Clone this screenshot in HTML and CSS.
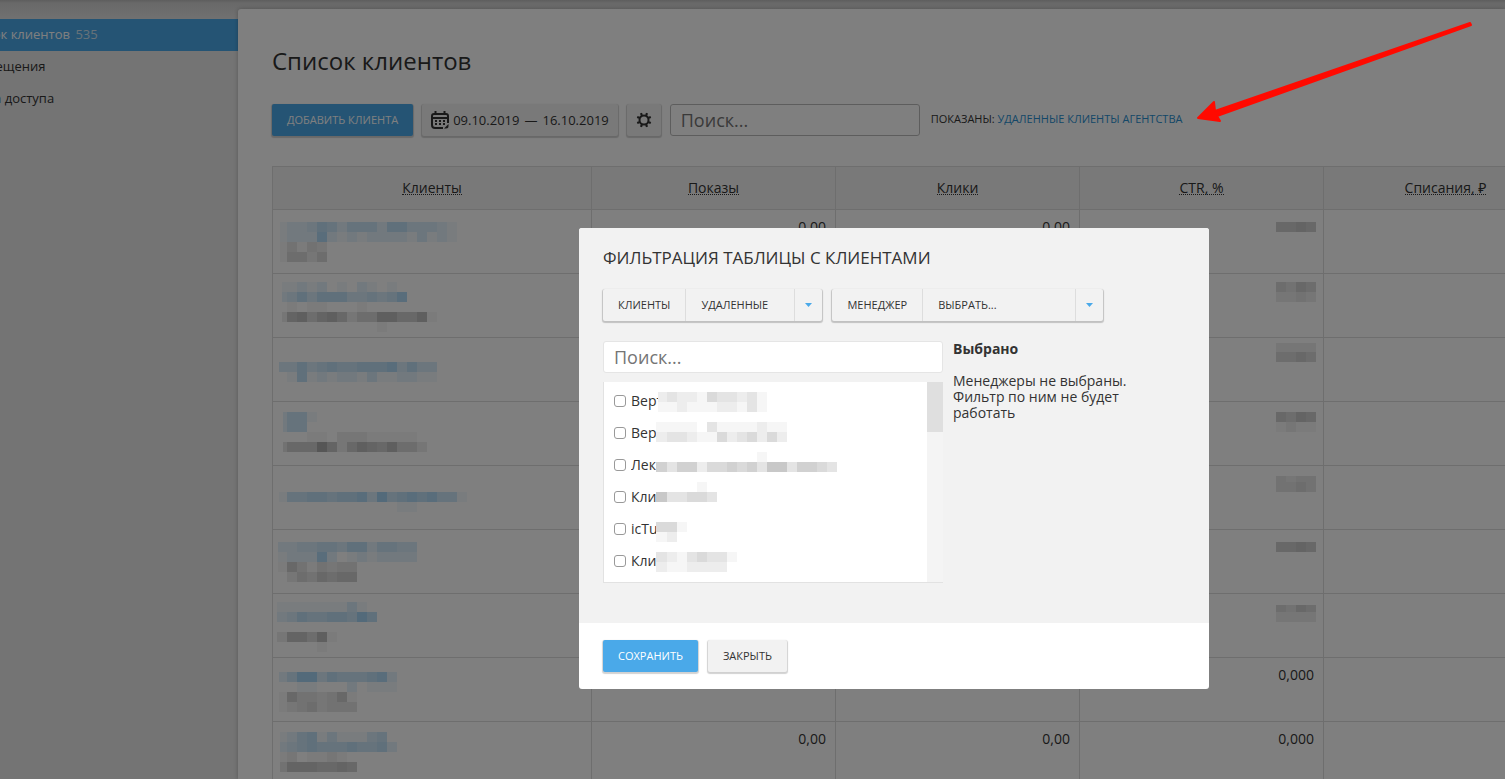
FILE: index.html
```
<!DOCTYPE html>
<html lang="ru">
<head>
<meta charset="utf-8">
<title>Список клиентов</title>
<link rel="stylesheet" href="styles.css">
</head>
<body>
<div class="page">
  <nav class="sidebar">
    <a class="nav-item active" href="#">Список клиентов <span class="count">535</span></a>
    <a class="nav-item" href="#">Оповещения</a>
    <a class="nav-item" href="#">Права доступа</a>
  </nav>
  <main class="panel">
    <h1>Список клиентов</h1>
    <div class="toolbar">
      <button class="btn primary" type="button">Добавить клиента</button>
      <button class="btn date" type="button">
        <svg width="18" height="18" viewBox="0 0 18 18" fill="none" stroke="#333" stroke-width="2"><path d="M12 17H4a3 3 0 0 1-3-3V5a2 2 0 0 1 2-2h12a2 2 0 0 1 2 2v7"/><path d="M1 7h16M4.500 0v4M13.500 0v4"/><path d="M13 17.500l4.500-4.500v2a2.500 2.500 0 0 1-2.500 2.500z" fill="#333" stroke="none"/><path d="M4 10h2M8 10h2M12 10h2M4 13h2M8 13h2M12 13h2"/></svg>
        <span class="range"><span>09.10.2019</span><span>—</span><span>16.10.2019</span></span>
      </button>
      <button class="btn gear" type="button" aria-label="Настройки">
        <svg width="16" height="16" viewBox="0 0 16 16" fill="none" stroke="#333"><circle cx="8" cy="8" r="4.500" stroke-width="2"/><path stroke-width="2.200" d="M6 4L5 1.200M10 4l1-2.800M6 12l-1 2.800M10 12l1 2.800M4 6L1.200 5M4 10l-2.800 1M12 6l2.800-1M12 10l2.800 1"/></svg>
      </button>
      <input class="search" type="text" placeholder="Поиск..." aria-label="Поиск клиентов">
      <p class="shown">Показаны: <a href="#">удаленные клиенты агентства</a></p>
    </div>
    <table class="clients">
      <colgroup><col class="col-name"><col class="col-num"><col class="col-num"><col class="col-num"><col class="col-num"></colgroup>
      <thead>
        <tr><th><span>Клиенты</span></th><th><span>Показы</span></th><th><span>Клики</span></th><th><span>CTR, %</span></th><th><span>Списания, ₽</span></th></tr>
      </thead>
      <tbody>
        <tr><td class="name"><svg class="mosaic" data-first="7" data-cells="12b122354244425533321 22b122262121222213121 32g13132 42g14424"></svg></td><td>0,00</td><td>0,00</td><td class="hidden-value"><svg class="mosaic" data-cells="12g5565"></svg></td><td></td></tr>
        <tr><td class="name"><svg class="mosaic" data-first="5" data-cells="8b1121201021010 18b2353555334346 28g010110001 38g2674675244775571 48g0000000000100"></svg></td><td></td><td></td><td class="hidden-value"><svg class="mosaic" data-cells="8g4354 18g2232"></svg></td><td></td></tr>
        <tr><td class="name"><svg class="mosaic" data-first="8" data-cells="24b3353454455563533 34b0151212213112211"></svg></td><td></td><td></td><td class="hidden-value"><svg class="mosaic" data-cells="5g2222 14g4454"></svg></td><td></td></tr>
        <tr><td class="name"><svg class="mosaic" data-first="4" data-cells="10b2441 20b2440 30g00011022211111 40g355596257657442"></svg></td><td></td><td></td><td class="hidden-value"><svg class="mosaic" data-cells="10g5465 20g1211"></svg></td><td></td></tr>
        <tr><td class="name"><svg class="mosaic" data-first="8" data-cells="26b1445545563745656441 36b00000000000011"></svg></td><td></td><td></td><td class="hidden-value"><svg class="mosaic" data-cells="10g3233 16g3343"></svg></td><td></td></tr>
        <tr><td class="name"><svg class="mosaic" data-first="9" data-cells="12b22334435524433 22b12226201212222 32g15313233 42g02435455"></svg></td><td></td><td></td><td class="hidden-value"><svg class="mosaic" data-cells="12g5565"></svg></td><td></td></tr>
        <tr><td class="name"><svg class="mosaic" data-first="10" data-cells="8b111111131 18b2354455475 38g266471 48g00001"></svg></td><td></td><td></td><td class="hidden-value"><svg class="mosaic" data-cells="11g4354 18g2222"></svg></td><td></td></tr>
        <tr><td class="name"><svg class="mosaic" data-first="8" data-cells="14b247735444562 24b001100020111 34g15332351 44g12342333"></svg></td><td></td><td></td><td>0,000</td><td></td></tr>
        <tr><td class="name"><svg class="mosaic" data-first="7" data-cells="10b124513111340 20b234544454452 30g1201121 40g36665565"></svg></td><td>0,00</td><td>0,00</td><td>0,000</td><td></td></tr>
      </tbody>
    </table>
  </main>
</div>

<div class="overlay">
  <section class="modal" role="dialog" aria-labelledby="modal-title">
    <div class="modal-body">
      <h2 id="modal-title">Фильтрация таблицы с клиентами</h2>
      <div class="filters">
        <div class="filter">
          <label for="clients">Клиенты</label>
          <div class="select clients-select">
            <select id="clients"><option>УДАЛЕННЫЕ</option></select>
            <svg viewBox="0 0 7 4" width="7" height="4"><path d="M0 0h7L3.500 4z" fill="#4aa9e9"/></svg>
          </div>
        </div>
        <div class="filter">
          <label for="manager">Менеджер</label>
          <div class="select manager-select">
            <select id="manager"><option>ВЫБРАТЬ...</option></select>
            <svg viewBox="0 0 7 4" width="7" height="4"><path d="M0 0h7L3.500 4z" fill="#4aa9e9"/></svg>
          </div>
        </div>
      </div>
      <div class="columns">
        <div class="managers">
          <input class="search" type="text" placeholder="Поиск..." aria-label="Поиск менеджера">
          <div class="list">
            <div class="items">
              <label><input type="checkbox"><span class="who wide">Верт</span><svg class="mosaic" data-first="9" data-cells="7g23221433231 17g11211122131"></svg></label>
              <label><input type="checkbox"><span class="who">Вер</span><svg class="mosaic" data-first="11" data-cells="5g1111031111211 15g2332114234242"></svg></label>
              <label><input type="checkbox"><span class="who">Лек</span><svg class="mosaic" data-first="11" data-cells="3g00000000001 13g535524454536635543"></svg></label>
              <label><input type="checkbox"><span class="who">Кли</span><svg class="mosaic" data-first="11" data-cells="1g000010 11g633443"></svg></label>
              <label><input type="checkbox"><span class="who">icTu</span><svg class="mosaic" data-first="11" data-cells="9g441 19g120"></svg></label>
              <label><input type="checkbox"><span class="who">Кли</span><svg class="mosaic" data-first="11" data-cells="7g32134331 17g21122220"></svg></label>
            </div>
            <div class="track"><div class="thumb"></div></div>
          </div>
        </div>
        <div class="chosen">
          <h3>Выбрано</h3>
          <p>Менеджеры не выбраны. Фильтр по ним не будет работать</p>
        </div>
      </div>
    </div>
    <footer>
      <button class="btn primary" type="button">Сохранить</button>
      <button class="btn" type="button">Закрыть</button>
    </footer>
  </section>
</div>

<svg class="arrow" width="280" height="104" viewBox="0 0 280 104"><path d="M3 98L19 82L20 91L275 3L276 5L22 96L25 101Z" fill="#ff0a00" stroke="#ff0a00" stroke-width="2" stroke-linejoin="round"/></svg>
<script src="script.js"></script>
</body>
</html>
```
FILE: styles.css
```
* { box-sizing: border-box; }
body {
  margin: 0;
  height: 100vh;
  overflow: hidden;
  color: #333;
  background: #e8e8e8;
  font: 14px/16px "Open Sans", "Noto Sans", sans-serif;
}
h1, h2, h3, p { margin: 0; font-weight: 400; }
input, button, select { font-family: inherit; color: inherit; }
a { color: #2a8fd0; text-decoration: none; }

.page {
  display: grid;
  grid-template-columns: 238px minmax(0, 1fr);
  height: 100vh;
  padding-top: 9px;
  background: linear-gradient(#bcbcbc 0, #d2d2d2 3px, #d8d8d8 9px, #e8e8e8 24px);
}
.sidebar { padding-top: 10px; overflow: hidden; }
.nav-item {
  display: block;
  height: 32px;
  text-indent: -38px;
  font-size: 13px;
  line-height: 30px;
  color: #333;
  white-space: nowrap;
}
.nav-item.active { background: #4aa9e9; color: #fff; }
.count { margin-left: 2px; color: #d0e4f2; }

.panel {
  padding: 36px 0 0 34px;
  overflow: hidden;
  background: #fff;
  border-radius: 3px 0 0 0;
  box-shadow: 0 0 4px rgba(0, 0, 0, .25);
}
h1 { font-size: 24px; line-height: 32px; }
.toolbar { display: flex; align-items: flex-start; gap: 9px; margin: 27px 0 30px; }
.btn {
  display: flex;
  align-items: center;
  height: 32px;
  padding: 0 15px 2px;
  border: 0;
  border-radius: 2px;
  background: #f2f2f2;
  box-shadow: 0 1px 1px 1px rgba(0, 0, 0, .18);
  font-size: 11px;
  text-transform: uppercase;
}
.btn.primary { background: #4aa9e9; color: #fff; }
.btn.date { gap: 4px; padding: 0 9px; font-size: 13px; }
.range { display: flex; gap: 5px; }
.btn.gear { padding: 0 9px; }
.search {
  width: 250px;
  height: 32px;
  padding: 0 10px;
  border: 1px solid #bbb;
  border-radius: 3px;
  background: #fff;
  font-size: 18px;
}
.search::placeholder { color: #757575; opacity: 1; }
.shown { margin-left: 2px; font-size: 11px; line-height: 30px; text-transform: uppercase; }

.clients { width: 1296px; border-collapse: collapse; table-layout: fixed; }
.col-name { width: 319px; }
.clients th, .clients td { border: 1px solid #ddd; padding: 0; }
.clients th { height: 43px; background: #f2f2f2; font-weight: 400; }
.clients th span { display: inline-block; border-bottom: 1px dotted #333; line-height: 13px; }
.clients td { height: 64px; padding: 9px 9px 0 0; text-align: right; vertical-align: top; }
.clients td.name, .clients td.hidden-value { padding: 0 7px 0 4px; }
.mosaic { display: block; flex: none; }
.hidden-value .mosaic { margin-left: auto; }

.overlay {
  position: fixed;
  inset: 0;
  display: flex;
  align-items: flex-start;
  justify-content: center;
  padding: 228px 0 0 283px;
  background: rgba(0, 0, 0, .5);
}
.modal { width: 630px; border-radius: 3px; overflow: hidden; background: #fff; }
.modal-body { padding: 18px 24px 40px; background: #f2f2f2; }
h2 { font-size: 17px; line-height: 24px; text-transform: uppercase; }
.filters { display: flex; gap: 10px; margin: 19px 0 20px; }
.filter {
  display: flex;
  height: 32px;
  border-radius: 2px;
  box-shadow: 0 1px 1px 1px rgba(0, 0, 0, .2);
  font-size: 11px;
  line-height: 32px;
  text-transform: uppercase;
}
.filter label { padding: 0 15px; }
.select { display: grid; grid-template-columns: 1fr 28px; align-items: center; justify-items: center; }
.clients-select { width: 137px; }
.manager-select { width: 181px; }
.select select {
  grid-area: 1 / 1 / 2 / 3;
  width: 100%;
  height: 32px;
  padding: 0 15px 2px;
  border: 0;
  border-left: 1px solid #ddd;
  background: linear-gradient(#ddd, #ddd) right 27px top / 1px 100% no-repeat;
  appearance: none;
  font-size: 11px;
}
.select svg { grid-area: 1 / 2; pointer-events: none; }
.columns { display: flex; gap: 10px; }
.managers { width: 340px; }
.managers .search { display: block; width: 100%; border-color: #e5e5e5; }
.list {
  display: flex;
  height: 201px;
  margin-top: 9px;
  border: solid #e2e2e2;
  border-width: 0 0 1px 1px;
  background: #fff;
}
.items { flex: 1; padding-top: 3px; }
.items label { display: flex; height: 32px; padding-left: 10px; }
.items input {
  flex: none;
  width: 12px;
  height: 12px;
  margin: 10px 5px 0 0;
  border: 1px solid #999;
  border-radius: 3px;
  background: #fff;
  appearance: none;
}
.who { width: 25px; overflow: hidden; line-height: 32px; white-space: nowrap; }
.who.wide { width: 27px; }
.track { width: 16px; background: #f4f4f4; }
.thumb { height: 50px; background: #dfdfdf; }
.chosen { width: 200px; }
h3 { margin-bottom: 16px; font-size: 14px; line-height: 16px; font-weight: 700; }
footer { display: flex; gap: 10px; padding: 17px 24px; }

.arrow { position: absolute; top: 20px; right: 30px; }
```
FILE: script.js
```
// Draws censored values as a mosaic. Each chunk is "<top><b|g><digits>",
// where every digit is the strength of one 10px tile.
const NS = "http://www.w3.org/2000/svg";
document.querySelectorAll(".mosaic").forEach(svg => {
  const first = Number(svg.dataset.first || 10);
  // Table mosaics keep a 10px lead column; list mosaics start right after the name.
  const lead = svg.closest(".items") ? first : 10;
  const rows = svg.dataset.cells.split(" ").map(c => c.match(/^(\d+)([bg])(\d+)$/));
  const cols = Math.max(...rows.map(r => r[3].length));
  const height = svg.closest(".items") ? 32 : 62;
  svg.setAttribute("width", lead + (cols - 1) * 10);
  svg.setAttribute("height", height);
  svg.setAttribute("shape-rendering", "crispEdges");
  rows.forEach((r, n) => {
    const top = Number(r[1]);
    const next = rows[n + 1] ? Number(rows[n + 1][1]) : top + 10;
    [...r[3]].forEach((d, i) => {
      if (d === "0") return;
      const rect = document.createElementNS(NS, "rect");
      rect.setAttribute("x", i ? lead + (i - 1) * 10 : lead - first);
      rect.setAttribute("y", top);
      rect.setAttribute("width", i ? 10 : first);
      rect.setAttribute("height", Math.min(10, next - top));
      rect.setAttribute("fill", r[2] === "b" ? "#4aa9e9" : "#333");
      rect.setAttribute("opacity", d * (r[2] === "b" ? .07 : .045));
      svg.append(rect);
    });
  });
});
```
